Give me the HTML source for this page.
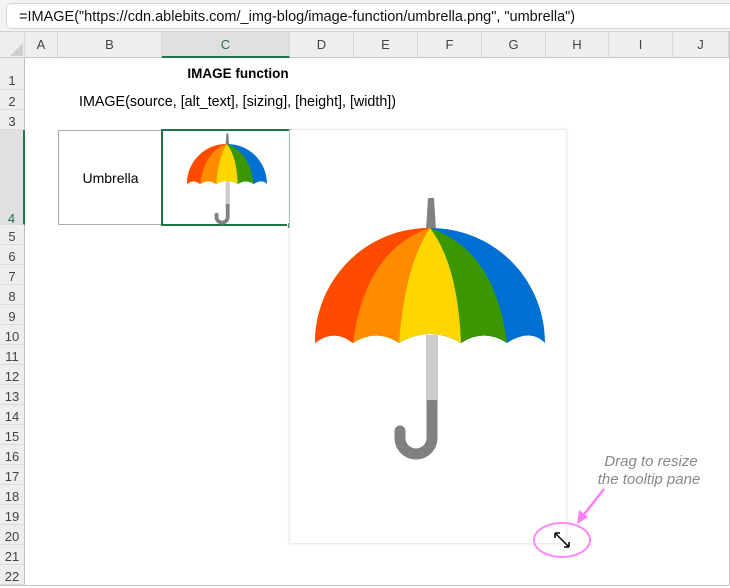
<!DOCTYPE html>
<html><head><style>
body{margin:0;width:730px;height:586px;overflow:hidden;background:#fff;font-family:"Liberation Sans",Arial,sans-serif;position:relative}
.a{position:absolute}
.fb{left:0;top:0;width:730px;height:31px;background:#f3f3f3;border-bottom:1px solid #d0d0d0}
.fbox{left:6px;top:3px;width:740px;height:26px;background:#fff;border:1px solid #d6d6d6;border-radius:5px;font-size:14.5px;line-height:26px;padding-left:12px;box-sizing:border-box;color:#111;white-space:nowrap}
.hdr{top:32px;height:26px;background:#eeeeee;border-bottom:1px solid #c6c6c6;box-sizing:border-box;font-size:13px;color:#444;text-align:center;line-height:26px;border-right:1px solid #d8d8d8}
.rh{left:0;width:25px;background:#eeeeee;border-right:1px solid #bdbdbd;border-bottom:1px solid #dcdcdc;box-sizing:border-box;font-size:13px;color:#444;text-align:center}
</style></head><body>
<div class="a fb"></div>
<div class="a fbox">=IMAGE("https://cdn.ablebits.com/_img-blog/image-function/umbrella.png", "umbrella")</div>
<div class="a hdr" style="left:0;width:25px"></div>
<svg class="a" style="left:10px;top:43px" width="13" height="13"><path d="M13 0V13H0Z" fill="#cfcfcf"/></svg>
<div class="a hdr" style="left:25px;width:33px">A</div>
<div class="a hdr" style="left:58px;width:104px">B</div>
<div class="a hdr" style="left:162px;width:128px;background:#e0e0e0;border-bottom:2px solid #217346;color:#217346">C</div>
<div class="a hdr" style="left:290px;width:64px">D</div>
<div class="a hdr" style="left:354px;width:64px">E</div>
<div class="a hdr" style="left:418px;width:64px">F</div>
<div class="a hdr" style="left:482px;width:64px">G</div>
<div class="a hdr" style="left:546px;width:63px">H</div>
<div class="a hdr" style="left:609px;width:64px">I</div>
<div class="a hdr" style="left:673px;width:56px">J</div>
<div class="a rh" style="top:58px;height:32px;line-height:46px">1</div>
<div class="a rh" style="top:90px;height:20px;line-height:23px">2</div>
<div class="a rh" style="top:110px;height:20px;line-height:23px">3</div>
<div class="a rh" style="top:130px;height:95px;line-height:178px;background:#e0e0e0;border-right:2px solid #217346;color:#217346">4</div>
<div id="rows"></div>
<script>
var s='';for(var i=5;i<=22;i++){s+='<div class="a rh" style="top:'+(225+(i-5)*20)+'px;height:20px;line-height:23px">'+i+'</div>';}
document.getElementById('rows').innerHTML=s;
</script>
<div class="a" style="left:729px;top:31px;width:1px;height:555px;background:#c6c6c6"></div>
<div class="a" style="left:0;top:585px;width:730px;height:1px;background:#c6c6c6"></div>
<div class="a" style="left:162px;top:66px;width:152px;text-align:center;font-weight:bold;font-size:13.5px">IMAGE function</div>
<div class="a" style="left:79px;top:94px;font-size:14.3px;white-space:nowrap">IMAGE(source, [alt_text], [sizing], [height], [width])</div>
<div class="a" style="left:58px;top:130px;width:104px;height:95px;border:1px solid #aaa;border-right:none;box-sizing:border-box;font-size:14px;text-align:center;line-height:95px">Umbrella</div>
<div class="a" style="left:161px;top:129px;width:130px;height:97px;border:2px solid #217346;box-sizing:border-box"></div>
<div class="a" style="left:287px;top:222px;width:5px;height:5px;background:#217346;border:1px solid #fff"></div>
<div class="a" style="left:290px;top:130px;width:276px;height:413px;background:#fff;box-shadow:0 0 2px 1px #e2e2e2"></div>
<svg class="a" style="left:0;top:0" width="730" height="586">
<defs>
<clipPath id="cp"><path d="M315,343 C315,280 365,228 430,228 C495,228 545,280 545,343 Q530,328 507,343 Q484,328 461,343 Q430,325 399,343 Q376,328 353,343 Q334,328 315,343Z"/></clipPath>
<g id="u">
<path d="M428,198 L434,198 L436,230 L426,230Z" fill="#808080"/>
<rect x="426" y="335" width="12" height="66" fill="#cccccc"/>
<path d="M432,400 V438 A16,16 0 0 1 400,438 V431" fill="none" stroke="#808080" stroke-width="11"/>
<circle cx="400" cy="431" r="5.5" fill="#808080"/>
<g clip-path="url(#cp)">
<rect x="300" y="220" width="260" height="140" fill="#0070d2"/>
<path d="M300,220 L430,228 Q495,250 507,343 L507,360 L300,360Z" fill="#3a9700"/>
<path d="M300,220 L430,228 Q458,265 461,343 L461,360 L300,360Z" fill="#ffd700"/>
<path d="M300,220 L430,228 Q405,265 399,343 L399,360 L300,360Z" fill="#ff8c00"/>
<path d="M300,220 L430,228 Q365,250 353,343 L353,360 L300,360Z" fill="#ff4a00"/>
</g>
</g>
</defs>
<use href="#u"/>
<use href="#u" transform="translate(227,144) scale(0.348) translate(-430,-228)"/>
<ellipse cx="562" cy="540" rx="28" ry="17" fill="none" stroke="#ff88ff" stroke-width="2"/>
<path d="M604,489 L582,517" stroke="#ff80ff" stroke-width="2.5"/>
<path d="M577,524 L579,510 L588,517Z" fill="#ff80ff"/>
<path d="M555,533 L569,547 M555,533 l0,5 M555,533 l5,0 M569,547 l0,-5 M569,547 l-5,0" stroke="#000" stroke-width="1.5" fill="none"/>
<text x="651" y="466" text-anchor="middle" font-style="italic" font-size="15" fill="#888" font-family="Liberation Sans,Arial,sans-serif">Drag to resize</text>
<text x="649" y="484" text-anchor="middle" font-style="italic" font-size="15" fill="#888" font-family="Liberation Sans,Arial,sans-serif">the tooltip pane</text>
</svg>
</body></html>
